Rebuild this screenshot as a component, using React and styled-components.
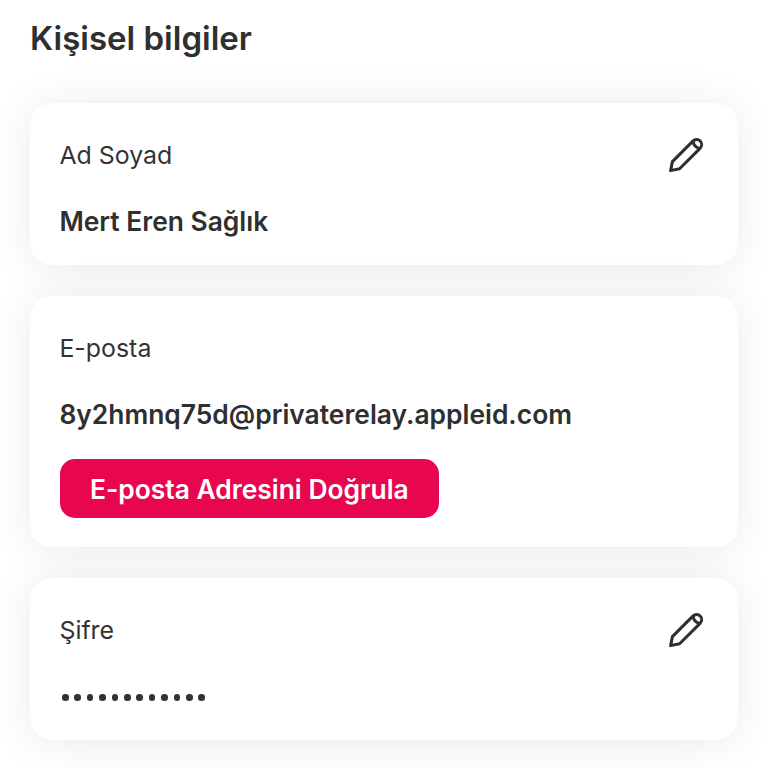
import React from 'react';
import styled, { createGlobalStyle } from 'styled-components';

const GlobalStyle = createGlobalStyle`
    html, body {
        margin: 0;
        padding: 0;
        background-color: #ffffff;
    }
    body {
        font-family: "Inter", "Liberation Sans", sans-serif;
        color: #2f2f2f;
    }
`

function PencilIcon() {
    return (
        <svg width="36" height="36" viewBox="0 0 36 36" fill="none" stroke="#2f2f2f" strokeWidth="3" strokeLinejoin="round" strokeLinecap="round">
            <path d="M2.6 33.6 L4.4 24.6 L24.6 4.4 C27 2 30.2 2 32.2 4 C34.2 6 34.2 9.2 31.8 11.6 L11.6 31.8 Z" />
            <path d="M25 4.5 C25.6 8 28 10.6 31.6 11.4" />
        </svg>
    );
}

function App() {
    return (
        <Page>
            <GlobalStyle />
            <Title>Kişisel bilgiler</Title>
            <CardList>
                <Card>
                    <LabelRow>
                        <Label>Ad Soyad</Label>
                        <EditButton><PencilIcon /></EditButton>
                    </LabelRow>
                    <Value>Mert Eren Sağlık</Value>
                </Card>
                <Card>
                    <LabelRow>
                        <Label>E-posta</Label>
                    </LabelRow>
                    <Value>8y2hmnq75d@privaterelay.appleid.com</Value>
                    <VerifyButton>E-posta Adresini Doğrula</VerifyButton>
                </Card>
                <Card>
                    <LabelRow>
                        <Label>Şifre</Label>
                        <EditButton><PencilIcon /></EditButton>
                    </LabelRow>
                    <Dots>
                        {Array.from({ length: 12 }).map((_, i) => <Dot key={i} />)}
                    </Dots>
                </Card>
            </CardList>
        </Page>
    );
}

const Page = styled.div`
    width: 768px;
    height: 768px;
    overflow: hidden;
    box-sizing: border-box;
    padding: 18px 30px 0;
    background-color: #ffffff;
`

const Title = styled.h1`
    margin: 0 0 45px;
    font-size: 33px;
    line-height: 40px;
    font-weight: 600;
    color: #2f2f2f;
`

const CardList = styled.div`
    display: flex;
    flex-direction: column;
    gap: 31px;
`

const Card = styled.div`
    display: flex;
    flex-direction: column;
    align-items: flex-start;
    box-sizing: border-box;
    padding: 30px 30px 26px;
    background-color: #ffffff;
    border-radius: 22px;
    box-shadow: 0 2px 44px rgba(0, 0, 0, 0.085);
`

const LabelRow = styled.div`
    display: flex;
    align-items: center;
    justify-content: space-between;
    width: 100%;
    height: 44px;
`

const Label = styled.span`
    margin-left: -0.6px;
    font-size: 24.9px;
    line-height: 44px;
    font-weight: 400;
    color: #333333;
`

const EditButton = styled.span`
    display: flex;
    margin-right: 4px;
`

const Value = styled.div`
    margin-top: 26px;
    margin-left: -0.6px;
    font-size: 26.4px;
    line-height: 36px;
    font-weight: 600;
    color: #2f2f2f;
`

const VerifyButton = styled.button`
    margin: 27px 0 3px;
    padding: 0 30px;
    height: 59px;
    border: none;
    border-radius: 15px;
    background-color: #e8064f;
    color: #ffffff;
    font-family: inherit;
    font-size: 26.4px;
    font-weight: 600;
`

const Dots = styled.div`
    display: flex;
    align-items: center;
    gap: 5.8px;
    height: 33px;
    margin-top: 29px;
    padding-left: 2px;
`

const Dot = styled.span`
    width: 6.6px;
    height: 6.6px;
    border-radius: 50%;
    background-color: #333333;
`

export default App;
